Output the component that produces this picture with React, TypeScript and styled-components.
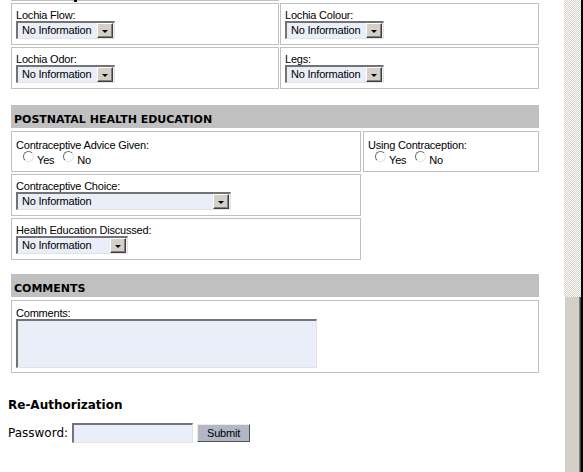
import React from "react";
import styled, { createGlobalStyle } from "styled-components";

const GlobalStyle = createGlobalStyle`
  html, body { margin: 0; padding: 0; background: #fff; overflow: hidden; }
  body {
    font-family: "Liberation Sans", Arial, sans-serif;
    font-size: 11px;
    color: #000;
  }
`;

const Page = styled.div`
  width: 530px;
  padding-left: 8px;
  display: flex;
  flex-direction: column;
`;

const Section = styled.div<{ $mt?: number }>`
  margin-left: 3px;
  width: 528px;
  display: flex;
  flex-direction: column;
  gap: 2px;
  margin-top: ${(p) => p.$mt ?? 0}px;
`;

const Row = styled.div<{ $cols: string; $gap?: number }>`
  display: grid;
  grid-template-columns: ${(p) => p.$cols};
  column-gap: ${(p) => p.$gap ?? 1}px;
`;

const Box = styled.div<{ $pt?: number; $pb?: number; $h?: number }>`
  position: relative;
  border: 1px solid #c0c0c0;
  padding: ${(p) => p.$pt ?? 6}px 4px ${(p) => p.$pb ?? 5}px;
  min-width: 0;
  ${(p) => (p.$h ? `height: ${p.$h}px; box-sizing: border-box;` : "")}
`;

const Fragment = styled.span`
  position: absolute;
  left: 62px;
  bottom: -2px;
  width: 3px;
  height: 3px;
  background: #000;
`;

const Label = styled.div`
  line-height: 11px;
  letter-spacing: -0.2px;
  white-space: nowrap;
`;

const Select = styled.div<{ $w: number }>`
  width: ${(p) => p.$w}px;
  height: 18px;
  box-sizing: border-box;
  display: flex;
  align-items: center;
  background: #e9eef8;
  border-style: solid;
  border-width: 2px 1px 1px 2px;
  border-color: #737373 #e2e2e2 #e2e2e2 #737373;
`;

const SelectValue = styled.span`
  flex: 1;
  padding-left: 4px;
  line-height: 15px;
  letter-spacing: -0.2px;
  white-space: nowrap;
`;

const DropButton = styled.span`
  width: 16px;
  height: 15px;
  margin-right: 1px;
  box-sizing: border-box;
  background: #d4d0c8;
  border: 1px solid;
  border-color: #ffffff #404040 #404040 #ffffff;
  box-shadow: inset -1px -1px #808080;
  display: flex;
  align-items: center;
  justify-content: center;
  &::after {
    content: "";
    margin-top: 1px;
    border-left: 3px solid transparent;
    border-right: 3px solid transparent;
    border-top: 3px solid #000;
  }
`;

const RadioGroup = styled.div`
  display: flex;
  align-items: flex-end;
  height: 15px;
  padding-left: 7px;
  gap: 9px;
`;

const RadioOption = styled.span`
  display: inline-flex;
  align-items: flex-end;
  gap: 3px;
  letter-spacing: -0.2px;
  line-height: 12px;
`;

const RadioDot = styled.span`
  width: 9px;
  height: 9px;
  margin-bottom: 4px;
  border-radius: 50%;
  border: 1px solid;
  border-color: #6e6e6e #e4e4e4 #e4e4e4 #6e6e6e;
  background: #fff;
`;

const TextArea = styled.div`
  width: 301px;
  height: 49px;
  box-sizing: border-box;
  background: #e9eef8;
  border-style: solid;
  border-width: 2px 1px 1px 2px;
  border-color: #737373 #e2e2e2 #e2e2e2 #737373;
`;

const Header = styled.div`
  height: 23px;
  margin-bottom: 1px;
  box-sizing: border-box;
  background: #c0c0c0;
  padding: 8px 0 0 3px;
  font: bold 11px/13px "DejaVu Sans", Verdana, sans-serif;
  white-space: nowrap;
`;

const AuthTitle = styled.div`
  margin-top: 25px;
  font: bold 12px/14px "DejaVu Sans", Verdana, sans-serif;
`;

const AuthRow = styled.div`
  margin-top: 11px;
  display: flex;
  align-items: center;
  gap: 4px;
`;

const AuthLabel = styled.span`
  font: 12px/14px "DejaVu Sans", Verdana, sans-serif;
`;

const PasswordInput = styled.div`
  width: 121px;
  height: 20px;
  box-sizing: border-box;
  background: #e9eef8;
  border-style: solid;
  border-width: 2px 1px 1px 2px;
  border-color: #737373 #e2e2e2 #e2e2e2 #737373;
`;

const SubmitButton = styled.div`
  width: 53px;
  height: 18px;
  box-sizing: border-box;
  display: flex;
  align-items: center;
  justify-content: center;
  background: #b2b6c5;
  border: 1px solid;
  border-color: #ececec #505050 #505050 #ececec;
  letter-spacing: -0.2px;
`;

const ScrollBar = styled.div`
  position: fixed;
  top: 0;
  right: 0;
  bottom: 0;
  width: 19px;
  display: flex;
  flex-direction: column;
  border-right: 2px solid #000;
  box-sizing: border-box;
  background-color: #fff;
  background-image: conic-gradient(#d4d0c8 25%, #fff 0 50%, #d4d0c8 0 75%, #fff 0);
  background-size: 2px 2px;
`;

const Thumb = styled.div`
  margin-top: 297px;
  flex: 1;
  background: #d4d0c8;
  border-left: 1px solid #fff;
  border-right: 1px solid #404040;
  box-shadow: inset -1px 0 #808080;
`;

function Dropdown({ w }: { w: number }) {
  return (
    <Select $w={w}>
      <SelectValue>No Information</SelectValue>
      <DropButton />
    </Select>
  );
}

function Radios() {
  return (
    <RadioGroup>
      <RadioOption>
        <RadioDot />
        Yes
      </RadioOption>
      <RadioOption>
        <RadioDot />
        No
      </RadioOption>
    </RadioGroup>
  );
}

export default function App() {
  return (
    <>
      <GlobalStyle />
      <Page>
        <Section $mt={-41}>
          <Row $cols="268px 259px">
            <Box $h={42}>
              <Fragment />
            </Box>
          </Row>
          <Row $cols="268px 259px">
            <Box>
              <Label>Lochia Flow:</Label>
              <Dropdown w={99} />
            </Box>
            <Box>
              <Label>Lochia Colour:</Label>
              <Dropdown w={99} />
            </Box>
          </Row>
          <Row $cols="268px 259px">
            <Box>
              <Label>Lochia Odor:</Label>
              <Dropdown w={99} />
            </Box>
            <Box>
              <Label>Legs:</Label>
              <Dropdown w={99} />
            </Box>
          </Row>
        </Section>

        <Section $mt={16}>
          <Header>POSTNATAL HEALTH EDUCATION</Header>
          <Row $cols="350px 176px" $gap={2}>
            <Box $pt={8} $pb={5}>
              <Label>Contraceptive Advice Given:</Label>
              <Radios />
            </Box>
            <Box $pt={8} $pb={5}>
              <Label>Using Contraception:</Label>
              <Radios />
            </Box>
          </Row>
          <Row $cols="350px 176px" $gap={2}>
            <Box>
              <Label>Contraceptive Choice:</Label>
              <Dropdown w={215} />
            </Box>
          </Row>
          <Row $cols="350px 176px" $gap={2}>
            <Box>
              <Label>Health Education Discussed:</Label>
              <Dropdown w={112} />
            </Box>
          </Row>
        </Section>

        <Section $mt={14}>
          <Header>COMMENTS</Header>
          <Box $pt={7} $pb={4}>
            <Label>Comments:</Label>
            <TextArea />
          </Box>
        </Section>

        <AuthTitle>Re-Authorization</AuthTitle>
        <AuthRow>
          <AuthLabel>Password:</AuthLabel>
          <PasswordInput />
          <SubmitButton>Submit</SubmitButton>
        </AuthRow>
      </Page>
      <ScrollBar>
        <Thumb />
      </ScrollBar>
    </>
  );
}
